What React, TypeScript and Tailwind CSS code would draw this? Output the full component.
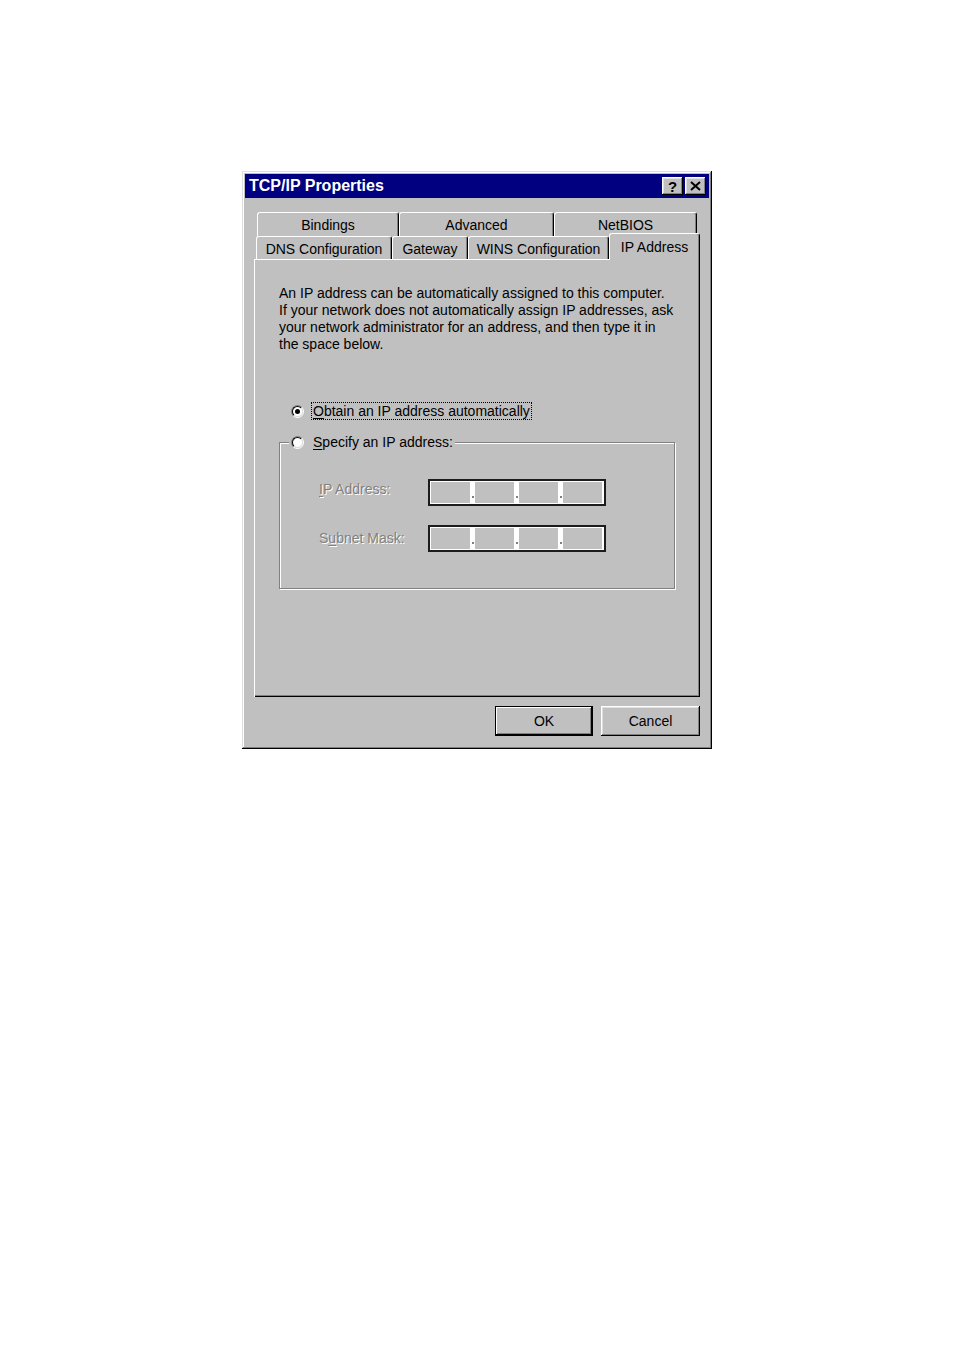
import React from "react";

interface TabSpec {
  label: string;
  width: number;
  selected?: boolean;
}

const BACK_TABS: TabSpec[] = [
  { label: "Bindings", width: 142 },
  { label: "Advanced", width: 155 },
  { label: "NetBIOS", width: 143 },
];

const FRONT_TABS: TabSpec[] = [
  { label: "DNS Configuration", width: 136 },
  { label: "Gateway", width: 76 },
  { label: "WINS Configuration", width: 141 },
  { label: "IP Address", width: 91, selected: true },
];

const INTRO_LINES = [
  "An IP address can be automatically assigned to this computer.",
  "If your network does not automatically assign IP addresses, ask",
  "your network administrator for an address, and then type it in",
  "the space below.",
];

// classic 3D bevels
const RAISED =
  "shadow-[inset_-1px_-1px_#000,inset_1px_1px_#fff,inset_-2px_-2px_#808080,inset_2px_2px_#dfdfdf]";

function Tab({ label, width, selected }: TabSpec) {
  if (selected) {
    return (
      <div
        className="relative z-10 -mt-[3px] flex h-[27px] items-start justify-center rounded-t-[3px] border-t border-l border-r border-white border-r-black bg-[#c0c0c0] pt-[3px] shadow-[inset_-1px_0_#808080]"
        style={{ width }}
      >
        {label}
      </div>
    );
  }
  return (
    <div
      className="flex h-full items-center justify-center rounded-t-[3px] border-t border-l border-r border-white border-r-black bg-[#c0c0c0] pt-[2px] shadow-[inset_-1px_0_#808080]"
      style={{ width }}
    >
      {label}
    </div>
  );
}

function Radio({ checked }: { checked?: boolean }) {
  return (
    <div className="h-[13px] w-[13px] shrink-0 rounded-full border border-t-[#808080] border-l-[#808080] border-r-white border-b-white">
      <div className="flex h-full w-full items-center justify-center rounded-full border border-t-black border-l-black border-r-[#dfdfdf] border-b-[#dfdfdf] bg-white">
        {checked && <div className="h-[5px] w-[5px] rounded-full bg-black" />}
      </div>
    </div>
  );
}

function IpField() {
  const segment = "h-full w-[39px] bg-[#c0c0c0]";
  const dot = (
    <div className="flex h-full w-[5px] items-end justify-center pb-[5px]">
      <div className="h-[2px] w-[2px] bg-[#808080]" />
    </div>
  );
  return (
    <div className="h-[27px] w-[178px] border-2 border-[#1c1c1c]">
      <div className="flex h-full w-full border border-white bg-white">
        <div className={segment} />
        {dot}
        <div className={segment} />
        {dot}
        <div className={segment} />
        {dot}
        <div className={segment} />
      </div>
    </div>
  );
}

function DisabledLabel({
  before,
  hotkey,
  after,
  raised,
}: {
  before: string;
  hotkey: string;
  after: string;
  raised?: boolean;
}) {
  return (
    <span
      className={`w-[109px] shrink-0 text-[#808080] [text-shadow:1px_1px_0_#fff] ${raised ? "-translate-y-[3px]" : ""}`}
    >
      {before}
      <span className="underline underline-offset-2">{hotkey}</span>
      {after}
    </span>
  );
}

export default function App() {
  return (
    <div className="min-h-[1358px] bg-white pt-[171px] pl-[242px] font-['Liberation_Sans',Arial,sans-serif] text-[14px] text-black">
      <div className="flex h-[578px] w-[470px] flex-col bg-[#c0c0c0] p-[3px] shadow-[inset_-1px_-1px_#000,inset_1px_1px_#dfdfdf,inset_-2px_-2px_#808080,inset_2px_2px_#fff]">
        {/* title bar */}
        <div className="flex h-[24px] items-center justify-between bg-[#000080] pl-[4px] pr-[3px]">
          <span className="text-[16px] font-bold text-white">TCP/IP Properties</span>
          <div className="flex gap-[2px]">
            <div
              className={`flex h-[18px] w-[21px] items-center justify-center bg-[#c0c0c0] text-[15px] font-bold leading-none ${RAISED}`}
            >
              ?
            </div>
            <div className={`flex h-[18px] w-[21px] items-center justify-center bg-[#c0c0c0] ${RAISED}`}>
              <svg width="11" height="10" viewBox="0 0 11 10">
                <path d="M1 1 L10 9 M10 1 L1 9" stroke="#000" strokeWidth="2" />
              </svg>
            </div>
          </div>
        </div>

        <div className="flex flex-1 flex-col px-[9px] pt-[14px]">
          {/* tabs */}
          <div className="flex h-[24px] pl-[3px]">
            {BACK_TABS.map((t) => (
              <Tab key={t.label} {...t} />
            ))}
          </div>
          <div className="-mb-px flex h-[24px] pl-[2px]">
            {FRONT_TABS.map((t) => (
              <div key={t.label} className={t.selected ? "flex" : "flex h-[23px]"}>
                <Tab {...t} />
              </div>
            ))}
          </div>

          {/* panel */}
          <div className="h-[438px] px-[25px] pt-[26px] shadow-[inset_1px_1px_#fff,inset_-1px_-1px_#000,inset_-2px_-2px_#808080]">
            <div className="leading-[17px]">
              {INTRO_LINES.map((line) => (
                <div key={line} className="whitespace-nowrap">
                  {line}
                </div>
              ))}
            </div>

            <div className="mt-[48px] ml-[12px] flex h-[20px] items-center">
              <Radio checked />
              <span className="ml-[7px] border border-dotted border-black px-[1px] leading-[16px]">
                <span className="underline underline-offset-2">O</span>btain an IP address automatically
              </span>
            </div>

            <div className="mt-[21px] h-[147px] w-[396px] border border-[#808080] shadow-[1px_1px_0_#fff,inset_1px_1px_0_#fff]">
              <div className="-mt-[9px] ml-[9px] flex h-[16px] w-fit items-center bg-[#c0c0c0] px-[2px]">
                <Radio />
                <span className="ml-[9px]">
                  <span className="underline underline-offset-2">S</span>pecify an IP address:
                </span>
              </div>

              <div className="mt-[29px] ml-[39px] flex items-center">
                <DisabledLabel before="" hotkey="I" after="P Address:" raised />
                <IpField />
              </div>
              <div className="mt-[19px] ml-[39px] flex items-center">
                <DisabledLabel before="S" hotkey="u" after="bnet Mask:" />
                <IpField />
              </div>
            </div>
          </div>

          {/* buttons */}
          <div className="mt-[9px] flex justify-end gap-[8px]">
            <button
              type="button"
              className="flex h-[30px] w-[98px] items-center justify-center border border-black bg-[#c0c0c0] shadow-[inset_-1px_-1px_#000,inset_1px_1px_#fff,inset_-2px_-2px_#808080]"
            >
              OK
            </button>
            <button
              type="button"
              className={`flex h-[30px] w-[99px] items-center justify-center bg-[#c0c0c0] ${RAISED}`}
            >
              Cancel
            </button>
          </div>
        </div>
      </div>
    </div>
  );
}
